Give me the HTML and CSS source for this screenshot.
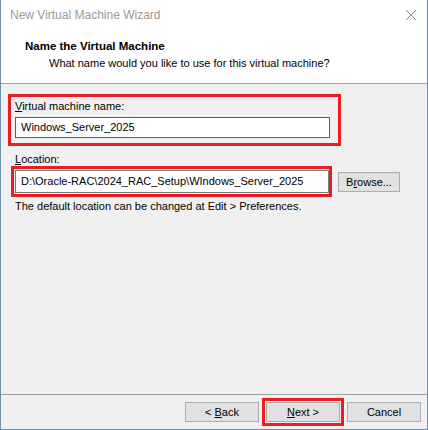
FILE: index.html
```html
<!DOCTYPE html>
<html>
<head>
<meta charset="utf-8">
<link rel="stylesheet" href="styles.css">
</head>
<body>
<div class="window">
  <div class="titlebar">
    <span class="title">New Virtual Machine Wizard</span>
    <svg class="close" width="12" height="12" viewBox="0 0 12 12"><path d="M1 1 L11 11 M11 1 L1 11" stroke="#8a8a8a" stroke-width="1" fill="none"/></svg>
  </div>
  <div class="header">
    <div class="h-title">Name the Virtual Machine</div>
    <div class="h-sub">What name would you like to use for this virtual machine?</div>
  </div>
  <div class="content">
    <div class="mark mark-name">
      <div class="label"><u>V</u>irtual machine name:</div>
      <div class="input focused">Windows_Server_2025</div>
    </div>
    <div class="label loc-label"><u>L</u>ocation:</div>
    <div class="loc-row">
      <div class="mark mark-loc">
        <div class="input loc">D:\Oracle-RAC\2024_RAC_Setup\WIndows_Server_2025</div>
      </div>
      <div class="btn browse">B<u>r</u>owse...</div>
    </div>
    <div class="note">The default location can be changed at Edit &gt; Preferences.</div>
  </div>
  <div class="footer">
    <div class="btn">&lt; <u>B</u>ack</div>
    <div class="mark mark-next"><div class="btn"><u>N</u>ext &gt;</div></div>
    <div class="btn">Cancel</div>
  </div>
</div>
</body>
</html>
```

FILE: styles.css
```css
* { box-sizing: border-box; }
html, body { margin: 0; padding: 0; background: #fff; }
body {
  font-family: "Liberation Sans", Arial, sans-serif;
  font-size: 11px;
  color: #000;
}
.window {
  width: 428px;
  height: 430px;
  border: 1px solid #6f8fae;
  border-top: none;
  background: #f0f0f0;
  display: flex;
  flex-direction: column;
}
.titlebar {
  height: 30px;
  background: #fff;
  display: flex;
  align-items: center;
  justify-content: space-between;
  padding: 0 10px 0 9px;
}
.title { color: #9a9a9a; font-size: 12px; }
.close { margin-top: -1px; }
.header {
  height: 54px;
  background: #fff;
  border-bottom: 1px solid #a0a0a0;
  padding: 9px 0 0 24px;
}
.h-title { font-weight: bold; font-size: 11.5px; line-height: 15px; }
.h-sub { line-height: 15px; padding-left: 24px; margin-top: 2px; }
.content {
  flex: 1;
  padding: 10px 0 0 7px;
}
.mark { border: 3px solid #e81e25; }
.mark-name {
  width: 333px;
  padding: 2px 8px 5px 4px;
}
.label { line-height: 15px; }
.label u, .btn u { text-decoration: underline; }
.input {
  height: 21px;
  background: #fff;
  border: 1px solid #7a7a7a;
  padding: 0 5px;
  line-height: 19px;
  white-space: nowrap;
}
.mark-name .label { margin-bottom: 3px; }
.input.focused { border-color: #0078d7; width: 315px; }
.loc-label { margin: 6px 0 0 7px; line-height: 14px; }
.loc-row {
  display: flex;
  align-items: center;
  gap: 6px;
  margin-left: 3px;
}
.mark-loc { width: 321px; padding: 1px 0 1px 1px; }
.input.loc { height: 23px; line-height: 21px; width: 314px; }
.btn {
  width: 74px;
  height: 20px;
  background: #e1e1e1;
  border: 1px solid #adadad;
  text-align: center;
  line-height: 18px;
}
.browse { width: 62px; }
.note { margin: 2px 0 0 7px; line-height: 15px; }
.footer {
  height: 35px;
  border-top: 1px solid #a0a0a0;
  display: flex;
  align-items: center;
  justify-content: flex-end;
  padding: 0 6px 0 0;
  gap: 3px;
}
.mark-next { padding: 1px; }
```
